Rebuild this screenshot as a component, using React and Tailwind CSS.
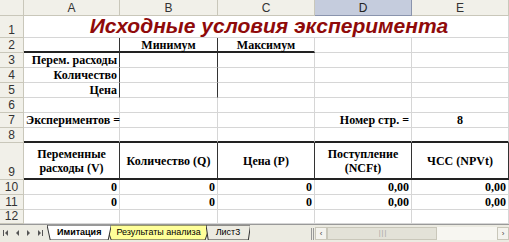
import React from 'react';

const serif = "[font-family:'Liberation_Serif',serif] font-bold text-[12px] text-black";
const sans = "[font-family:'Liberation_Sans',Arial,sans-serif]";
const grid = 'border-r border-b border-[#d6d6d6]';

function ColHead({ children, active }) {
  return (
    <div
      className={`flex items-center justify-center border-r border-b ${sans} text-[12px] ${
        active ? 'bg-[#c5ccdd] border-[#8a94ad] text-[#222]' : 'bg-[#f1f0e9] border-[#c9c7ba] text-[#333]'
      }`}
    >
      {children}
    </div>
  );
}

function RowHead({ n }) {
  return (
    <div className={`flex items-end justify-center pb-[1px] bg-[#f1f0e9] border-r border-b border-[#c9c7ba] ${sans} text-[12px] leading-none text-[#333]`}>
      {n}
    </div>
  );
}

function Cell({ children, className = '', align = 'justify-end' }) {
  return (
    <div className={`flex items-center ${align} px-[2px] whitespace-nowrap leading-none ${serif} ${className}`}>
      {children}
    </div>
  );
}

function Tab({ children, active, yellow }) {
  return (
    <div className="relative flex items-center h-[15px] px-[10px] -ml-[5px]">
      <svg className="absolute inset-0 w-full h-full" viewBox="0 0 100 15" preserveAspectRatio="none">
        <polygon
          points="0,0 100,0 95,15 5,15"
          fill={active ? '#ffffff' : yellow ? '#ffff99' : '#ecebe2'}
          stroke="#333"
          strokeWidth="1"
          vectorEffect="non-scaling-stroke"
        />
      </svg>
      <span className={`relative ${sans} text-[9px] leading-none text-black ${active ? 'font-bold' : ''}`}>
        {children}
      </span>
    </div>
  );
}

function NavArrow({ dir, bar }) {
  return (
    <svg width="9" height="8" viewBox="0 0 9 8" className="text-[#555]">
      {dir === 'left' ? (
        <>
          {bar && <rect x="1" y="1" width="1" height="6" fill="currentColor" />}
          <polygon points="6,1 3,4 6,7" fill="currentColor" />
        </>
      ) : (
        <>
          <polygon points="3,1 6,4 3,7" fill="currentColor" />
          {bar && <rect x="7" y="1" width="1" height="6" fill="currentColor" />}
        </>
      )}
    </svg>
  );
}

export default function App() {
  return (
    <div className="w-[509px] h-[242px] bg-white overflow-hidden flex flex-col">
      <div className="grid grid-cols-[24px_96px_98px_97px_97px_97px] grid-rows-[16px_22px_15px_15px_15px_15px_15px_15px_15px_37px_15px_15px_14px]">
        {/* header row */}
        <div className="bg-[#f1f0e9] border-r border-b border-[#c9c7ba]" />
        <ColHead>A</ColHead>
        <ColHead>B</ColHead>
        <ColHead>C</ColHead>
        <ColHead active>D</ColHead>
        <ColHead>E</ColHead>

        {/* row 1 */}
        <RowHead n="1" />
        <div className={`col-span-5 flex items-end justify-center pb-[1px] ${grid}`}>
          <span className={`${sans} font-bold italic text-[21px] leading-none text-[#8f0a0a] translate-x-[3px]`}>
            Исходные условия эксперимента
          </span>
        </div>

        {/* row 2 */}
        <RowHead n="2" />
        <Cell className="border-b-2 border-b-[#222] border-r border-r-[#333]" />
        <Cell align="justify-center" className="border-b-2 border-b-[#222] border-r border-r-[#333] text-[11px]">
          Минимум
        </Cell>
        <Cell align="justify-center" className="border-b-2 border-b-[#222] border-r border-r-[#d6d6d6] text-[11px]">
          Максимум
        </Cell>
        <Cell className={grid} />
        <Cell className={grid} />

        {/* rows 3-5 */}
        {['Перем. расходы', 'Количество', 'Цена'].map((label, i) => (
          <React.Fragment key={label}>
            <RowHead n={String(i + 3)} />
            <Cell className="border-b border-b-[#d6d6d6] border-r border-r-[#333]">{label}</Cell>
            <Cell className="border-b border-b-[#d6d6d6] border-r border-r-[#333]" />
            <Cell className={grid} />
            <Cell className={grid} />
            <Cell className={grid} />
          </React.Fragment>
        ))}

        {/* row 6 */}
        <RowHead n="6" />
        <Cell className={grid} />
        <Cell className={grid} />
        <Cell className={grid} />
        <Cell className={grid} />
        <Cell className={grid} />

        {/* row 7 */}
        <RowHead n="7" />
        <Cell align="justify-start" className={grid}>
          Экспериментов =
        </Cell>
        <Cell className={grid} />
        <Cell className={grid} />
        <Cell className={grid}>Номер стр. =</Cell>
        <Cell align="justify-center" className={grid}>
          8
        </Cell>

        {/* row 8 */}
        <RowHead n="8" />
        {[0, 1, 2, 3, 4].map((k) => (
          <Cell key={k} className="border-r border-r-[#d6d6d6] border-b-2 border-b-[#222]" />
        ))}

        {/* row 9 */}
        <RowHead n="9" />
        {[
          ['Переменные', 'расходы (V)'],
          ['Количество (Q)'],
          ['Цена (P)'],
          ['Поступление', '(NCFt)'],
          ['ЧСС (NPVt)'],
        ].map((lines, k) => (
          <div
            key={k}
            className={`flex flex-col items-center justify-center text-center leading-[14px] border-b-2 border-b-[#222] border-r border-r-[#333] ${serif}`}
          >
            {lines.map((l) => (
              <span key={l}>{l}</span>
            ))}
          </div>
        ))}

        {/* rows 10-11 */}
        {['10', '11'].map((n) => (
          <React.Fragment key={n}>
            <RowHead n={n} />
            <Cell className={grid}>0</Cell>
            <Cell className={grid}>0</Cell>
            <Cell className={grid}>0</Cell>
            <Cell className={grid}>0,00</Cell>
            <Cell className={grid}>0,00</Cell>
          </React.Fragment>
        ))}

        {/* row 12 */}
        <RowHead n="12" />
        <Cell className={grid} />
        <Cell className={grid} />
        <Cell className={grid} />
        <Cell className={grid} />
        <Cell className={grid} />
      </div>

      {/* sheet tabs + scroll bar */}
      <div className="flex-1 flex items-start bg-[#ecebe2] border-t border-[#999]">
        <div className="flex items-center gap-[2px] h-[15px] pl-[2px] w-[52px]">
          <NavArrow dir="left" bar />
          <NavArrow dir="left" />
          <NavArrow dir="right" />
          <NavArrow dir="right" bar />
        </div>
        <div className="flex items-start">
          <div className="relative z-10 flex">
            <Tab active>Имитация</Tab>
          </div>
          <Tab yellow>Результаты анализа</Tab>
          <Tab>Лист3</Tab>
        </div>
        <div className="flex-1" />
        <div className="flex items-center h-[15px] mt-[1px]">
          <div className="w-[3px] h-[12px] border-l border-r border-[#999] mr-[1px]" />
          <div className={`w-[12px] h-[13px] flex items-center justify-center bg-[#f4f3ee] border border-[#c9c7ba] text-[8px] text-[#444] ${sans}`}>
            &lsaquo;
          </div>
          <div className="w-[170px] h-[13px] flex bg-[#f7f6f1]">
            <div className="w-[110px] h-[13px] flex items-center justify-center bg-[#e3e2d8] border border-[#c9c7ba]">
              <span className="text-[7px] text-[#999] tracking-[-1px]">|||</span>
            </div>
          </div>
          <div className={`w-[12px] h-[13px] flex items-center justify-center bg-[#f4f3ee] border border-[#c9c7ba] text-[8px] text-[#444] ${sans}`}>
            &rsaquo;
          </div>
        </div>
      </div>
    </div>
  );
}
